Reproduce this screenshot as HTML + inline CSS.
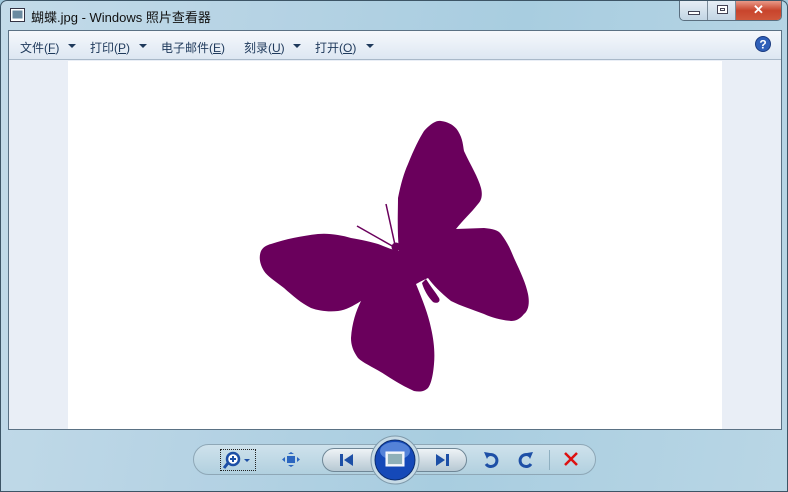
<!DOCTYPE html>
<html><head><meta charset="utf-8"><style>
*{margin:0;padding:0;box-sizing:border-box}
body{width:788px;height:492px;overflow:hidden;font-family:"Liberation Sans","Noto Sans CJK SC",sans-serif;background:#9fc8dc}
.frame{position:absolute;left:0;top:0;width:788px;height:492px;background:linear-gradient(100deg,#c3dbe9 0%,#b6d3e4 30%,#a8cde0 60%,#b9d6e5 100%);border:1px solid #3d5566;border-radius:7px 7px 0 0}
.title{position:absolute;left:30px;top:6px;font-size:13px;color:#111}
.inner{position:absolute;left:7px;top:29px;width:774px;height:400px;border:1px solid #5a7184;background:#e9eef6}
.menu{position:absolute;left:0;top:0;width:772px;height:29px;background:linear-gradient(#f5f8fc,#dde7f2);border-bottom:1px solid #a9b9c9;font-size:12px;color:#1e395b}
.menu span{position:absolute;top:8px}
.tri{display:inline-block;width:0;height:0;border-left:4px solid transparent;border-right:4px solid transparent;border-top:4px solid #1e395b;position:absolute;top:13px}
.white{position:absolute;left:59px;top:30px;width:654px;height:368px;background:#fff}
.btns{position:absolute;left:678px;top:0;height:20px;width:103px;border:1px solid #5a6f80;border-top:none;border-radius:0 0 5px 5px;overflow:hidden;display:flex}
.b1,.b2{width:28px;background:linear-gradient(#e6eef5,#c2d5e4);border-right:1px solid #7a8b99;position:relative}
.b3{flex:1;background:linear-gradient(#e99a88,#c8442c 50%,#d0573b);position:relative;color:#fff;font-weight:bold;text-align:center;font-size:13px;line-height:18px}
.bar{position:absolute;left:192px;top:443px;width:403px;height:31px;border:1px solid #8ea7b6;border-radius:16px;background:linear-gradient(#cfe2ec,#b1d0df)}
.nav{position:absolute;top:447px;height:24px;border:1px solid #6f8797;background:linear-gradient(#eef3f6,#b6c8d3);}
</style></head><body>
<div class="frame">
<svg style="position:absolute;left:9px;top:7px" width="15" height="14"><rect x="0.5" y="0.5" width="14" height="13" fill="#fff" stroke="#334"/><rect x="2.5" y="2.5" width="10" height="8" fill="#6a8aa0"/></svg>
<div class="title">蝴蝶.jpg - Windows 照片查看器</div>
<div class="btns"><div class="b1"><div style="position:absolute;left:8px;top:10px;width:12px;height:4px;background:#fff;border:1px solid #445"></div></div><div class="b2"><div style="position:absolute;left:9px;top:4px;width:11px;height:9px;border:1px solid #445;background:#fff"><div style="margin:2px;width:5px;height:3px;border:1px solid #445"></div></div></div><div class="b3">✕</div></div>
<div class="inner">
<div class="menu">
<span style="left:11px">文件(<u>F</u>)</span><i class="tri" style="left:59px"></i>
<span style="left:81px">打印(<u>P</u>)</span><i class="tri" style="left:130px"></i>
<span style="left:152px">电子邮件(<u>E</u>)</span>
<span style="left:235px">刻录(<u>U</u>)</span><i class="tri" style="left:284px"></i>
<span style="left:306px">打开(<u>O</u>)</span><i class="tri" style="left:357px"></i>
<svg style="position:absolute;left:746px;top:5px" width="16" height="16"><circle cx="8" cy="8" r="7.5" fill="#2f5fb8" stroke="#1a3b80"/><text x="8" y="12.5" font-size="12" font-weight="bold" fill="#fff" text-anchor="middle" font-family="Liberation Sans">?</text></svg>
</div>
<div class="white"></div>
</div>
<svg style="position:absolute;left:0;top:0" width="788" height="430">
<g fill="#6a005c">
<path d="M398,250 C396,230 397,210 397,197 C400,182 403,172 407,163 C413,148 418,138 423,130 C430,122 436,119 440,120 C448,121 454,125 457,130 C462,138 462,145 463,150 C470,165 477,176 480,187 C482,195 480,200 477,203 C470,212 462,219 455,228 L483,227 C492,228 497,229 500,233 C507,242 510,250 513,257 C520,272 525,283 527,293 C529,303 527,310 523,313 C519,318 515,320 510,320 C500,319 492,317 483,313 C470,308 460,305 450,300 C440,292 432,284 427,277 C420,280 417,282 415,283 C422,300 427,313 430,327 C433,340 434,352 433,363 C432,375 430,383 427,387 C423,391 418,391 413,390 C402,385 392,379 383,373 C372,366 362,362 357,357 C352,350 350,344 350,337 C351,322 355,310 360,300 C352,305 345,309 337,310 C328,311 318,310 310,307 C300,302 292,295 283,287 C274,280 266,275 263,270 C258,262 258,255 260,250 C262,246 266,244 270,243 C285,238 300,235 317,233 C328,232 340,234 350,237 C362,239 370,241 377,243 C385,246 391,249 398,250 Z"/>
<path d="M425,278 C430,286 435,292 438,297 C440,301 436,303 432,301 C427,296 423,289 421,282 Z"/>
<circle cx="395" cy="246" r="4.5"/>
</g>
<g stroke="#6a005c" stroke-width="1.5" fill="none"><path d="M394,244 L385,203"/><path d="M393,246 L356,225"/></g>
</svg>
<div class="bar"></div>
<div style="position:absolute;left:219px;top:448px;width:36px;height:22px;border:1px dotted #222"></div>
<svg style="position:absolute;left:221px;top:449px" width="32" height="20"><circle cx="11" cy="9" r="6" fill="#fff" stroke="#1d4fa6" stroke-width="2.5"/><path d="M8,9h6M11,6v6" stroke="#1d4fa6" stroke-width="2"/><path d="M6,13l-4,5" stroke="#1d4fa6" stroke-width="3"/><path d="M22,9h6l-3,3z" fill="#1d4fa6"/></svg>
<svg style="position:absolute;left:280px;top:450px" width="20" height="18"><rect x="6" y="5" width="8" height="7" fill="#2b66c0"/><path d="M7,3h6l-3,-2zM7,14h6l-3,2zM4,6v5l-3,-2.5zM16,6v5l3,-2.5z" fill="#2b66c0"/></svg>
<div class="nav" style="left:321px;width:66px;border-radius:12px 0 0 12px"></div>
<div class="nav" style="left:404px;width:62px;border-radius:0 12px 12px 0"></div>
<svg style="position:absolute;left:337px;top:452px" width="18" height="14"><rect x="2" y="1" width="3" height="12" fill="#1d4fa6"/><path d="M15,1v12l-9,-6z" fill="#1d4fa6"/></svg>
<svg style="position:absolute;left:432px;top:452px" width="18" height="14"><rect x="13" y="1" width="3" height="12" fill="#1d4fa6"/><path d="M3,1v12l9,-6z" fill="#1d4fa6"/></svg>
<svg style="position:absolute;left:369px;top:434px" width="50" height="50"><circle cx="25" cy="25" r="24" fill="#c7dbe6" stroke="#7f9aab"/><circle cx="25" cy="25" r="20" fill="#1549b8" stroke="#0c2d70"/><ellipse cx="25" cy="16" rx="15" ry="9" fill="#6f9be6" opacity=".7"/><rect x="16" y="17" width="18" height="14" fill="#e8eef3" stroke="#fff"/><rect x="18" y="19" width="14" height="10" fill="#8fb0b8"/></svg>
<svg style="position:absolute;left:481px;top:449px" width="60" height="20"><path d="M5,6 A6,6 0 1 1 4,14" stroke="#1d4fa6" stroke-width="3" fill="none"/><path d="M2,2l6,1-3,6z" fill="#1d4fa6"/><path d="M48,6 A6,6 0 1 0 49,14" stroke="#1d4fa6" stroke-width="3" fill="none"/><path d="M51,2l-6,1 3,6z" fill="#1d4fa6"/></svg>
<div style="position:absolute;left:548px;top:449px;width:1px;height:20px;background:#8fb0c1"></div>
<svg style="position:absolute;left:562px;top:450px" width="16" height="16"><path d="M2,2L14,14M14,2L2,14" stroke="#d11" stroke-width="2.5"/></svg>
</div>
</body></html>
